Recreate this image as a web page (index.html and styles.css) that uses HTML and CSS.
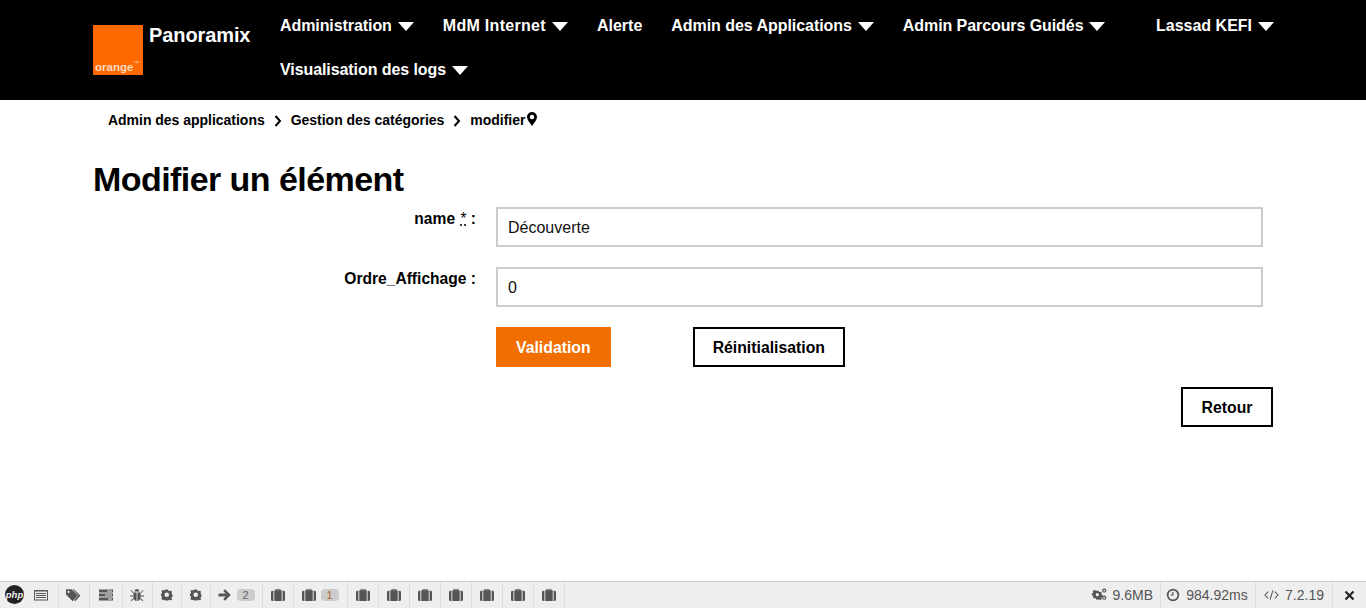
FILE: index.html
```html
<!DOCTYPE html>
<html lang="fr">
<head>
<meta charset="utf-8">
<title>Panoramix</title>
<link rel="stylesheet" href="styles.css">
</head>
<body>
<svg class="defs" width="0" height="0" aria-hidden="true">
  <symbol id="brief" viewBox="0 0 14 14"><path d="M4.500 2.200V1.200h5v1h1.200V13H3.300V2.200zM5.600 2.200h2.800V2.100H5.600zM0 4.200Q0 2.800 1.500 2.800H2.400V13H1.500Q0 13 0 11.500zM11.600 2.800h.9Q14 2.800 14 4.200v7.300Q14 13 12.500 13h-.9z"/></symbol>
  <symbol id="gear" viewBox="0 0 14 14"><path fill-rule="evenodd" d="M5.300 .5h3.400l.4 1.700 1.300.6 1.500-.9 1.700 1.700-.9 1.500.6 1.300 1.700.4v2.400l-1.700.4-.6 1.300.9 1.500-1.700 1.700-1.500-.9-1.300.6-.4 1.700H5.300l-.4-1.700-1.300-.6-1.500.9L.4 11.400l.9-1.500-.6-1.300L-.9 8.200V5.800l1.700-.4.6-1.300-.9-1.500 1.700-1.700 1.500.9 1.300-.6zM7 4.200a2.800 2.800 0 1 0 0 5.600 2.800 2.800 0 0 0 0-5.600z"/></symbol>
  <symbol id="caret" viewBox="0 0 16 9"><path d="M0 0h16L8 9z"/></symbol>
  <symbol id="chev" viewBox="0 0 8 12"><path d="M1.500 1L6 6l-4.500 5" fill="none" stroke="currentColor" stroke-width="2"/></symbol>
</svg>

<header class="topbar">
  <div class="container topbar-in">
    <a class="brand-logo" href="#"><span class="brand-word">orange</span><span class="brand-tm">™</span></a>
    <a class="brand-name" href="#">Panoramix</a>
    <nav class="menu">
      <a class="m-tight" href="#">Administration <svg class="caret"><use href="#caret"/></svg></a>
      <a class="m-wide" href="#">MdM Internet <svg class="caret"><use href="#caret"/></svg></a>
      <a href="#">Alerte</a>
      <a class="m-tight3" href="#">Admin des Applications <svg class="caret"><use href="#caret"/></svg></a>
      <a class="m-tight2" href="#">Admin Parcours Guidés <svg class="caret"><use href="#caret"/></svg></a>
      <a class="m-tight" href="#">Visualisation des logs <svg class="caret"><use href="#caret"/></svg></a>
    </nav>
    <a class="user" href="#">Lassad KEFI <svg class="caret"><use href="#caret"/></svg></a>
  </div>
</header>

<main class="container">
  <ol class="crumbs">
    <li>Admin des applications</li>
    <li class="sep"><svg class="chev"><use href="#chev"/></svg></li>
    <li>Gestion des catégories</li>
    <li class="sep"><svg class="chev"><use href="#chev"/></svg></li>
    <li class="last">modifier<svg class="pin" viewBox="0 0 10 14"><path fill-rule="evenodd" d="M5 0a5 5 0 0 1 5 5c0 3-3 6-5 9-2-3-5-6-5-9a5 5 0 0 1 5-5zM5 2.800a2.200 2.200 0 1 0 0 4.400 2.200 2.200 0 0 0 0-4.400z"/></svg></li>
  </ol>
  <h1 class="title">Modifier un élément</h1>
  <form class="form">
    <label class="lbl" for="f-name">name <abbr title="obligatoire">*</abbr> :</label>
    <input class="field" id="f-name" type="text" value="Découverte">
    <label class="lbl" for="f-ordre">Ordre_Affichage :</label>
    <input class="field" id="f-ordre" type="text" value="0">
    <div class="actions">
      <button class="btn btn-primary" type="button">Validation</button>
      <button class="btn btn-outline" type="button">Réinitialisation</button>
    </div>
  </form>
  <div class="back"><a class="btn btn-outline btn-back" href="#">Retour</a></div>
</main>

<footer class="debugbar">
  <div class="dbg-left">
    <span class="dbg-logo">php</span>
    <span class="dbg-i w-list"><svg class="ic" viewBox="0 0 14 14"><path fill-rule="evenodd" d="M0 2h14v10.500H0zM1 3.500v8h12v-8zM2 5h10v1H2zM2 7h10v1H2zM2 9h10v1H2z"/></svg></span>
    <span class="dbg-i w-tag"><svg class="ic ic-tag" viewBox="0 0 15 14"><path fill-rule="evenodd" d="M0 1h5.500l6 6-5 5.500L0 6zM2.500 2.500a1 1 0 1 0 0 2 1 1 0 0 0 0-2zM7.500 1l6.500 6-5 5.500-1-1L12 7 6.500 1z"/></svg></span>
    <span class="dbg-i w-bars"><svg class="ic" viewBox="0 0 14 14"><path fill-rule="evenodd" d="M0 1.500h14v3H0zM0 5.500h14v3H0zM0 9.500h14v3H0zM8 2.500v1h5v-1zM6 6.500v1h7v-1zM9 10.500v1h4v-1z"/></svg></span>
    <span class="dbg-i w-bug"><svg class="ic" viewBox="0 0 14 14"><path d="M4.500 3.500a2.500 2.500 0 0 1 5 0zM4 4.500h2.600V13C4.800 13 3.500 11.500 3.500 9.500V6zM7.400 4.500H10l.5 1.500v3.500c0 2-1.300 3.500-3.100 3.500zM1 2l3 3-.6.6-3-3zM13 2l-3 3 .6.6 3-3zM0 7.500h3.500v1H0zM10.500 7.500H14v1h-3.500zM3.400 10l.6.6-2.700 2.700-.6-.7zM10.600 10l-.6.6 2.700 2.700.6-.7z"/></svg></span>
    <span class="dbg-i w-gear"><svg class="ic ic-gear"><use href="#gear"/></svg></span>
    <span class="dbg-i w-gear2"><svg class="ic ic-gear"><use href="#gear"/></svg></span>
    <span class="dbg-i w-arrow"><svg class="ic" viewBox="0 0 14 14"><path d="M7 1.200L12.800 7 7 12.800 5.200 11l2.500-2.500H.5v-3h7.200L5.200 3z"/></svg><b class="badge">2</b></span>
    <span class="dbg-i w-b"><svg class="ic"><use href="#brief"/></svg></span>
    <span class="dbg-i w-b1"><svg class="ic"><use href="#brief"/></svg><b class="badge b-amber">1</b></span>
    <span class="dbg-i w-b"><svg class="ic"><use href="#brief"/></svg></span>
    <span class="dbg-i w-b"><svg class="ic"><use href="#brief"/></svg></span>
    <span class="dbg-i w-b"><svg class="ic"><use href="#brief"/></svg></span>
    <span class="dbg-i w-b"><svg class="ic"><use href="#brief"/></svg></span>
    <span class="dbg-i w-b"><svg class="ic"><use href="#brief"/></svg></span>
    <span class="dbg-i w-b"><svg class="ic"><use href="#brief"/></svg></span>
    <span class="dbg-i w-b"><svg class="ic"><use href="#brief"/></svg></span>
  </div>
  <div class="dbg-right">
    <span class="dbg-s w-mem"><svg class="ic" viewBox="0 0 16 14"><g fill-rule="evenodd"><path d="M4 4h3l.4 1.300 1.100.5 1.200-.6 1.500 1.500-.6 1.200.5 1.100 1.300.4v2.200l-1.300.4-.5 1.100.6 1.200-1.500 1.500-1.200-.6-1.100.5L7 15H4l-.4-1.300-1.100-.5-1.200.6L-.200 12.300l.6-1.200-.5-1.100L-1.400 9.600V7.400L-.100 7l.5-1.100-.6-1.200 1.500-1.500 1.200.6 1.100-.5zM5.500 7a2 2 0 1 0 0 4 2 2 0 0 0 0-4z" transform="translate(1 -1) scale(.85)"/><path d="M13 0a2.300 2.300 0 1 1 0 4.600A2.300 2.300 0 0 1 13 0zm0 1.300a1 1 0 1 0 0 2 1 1 0 0 0 0-2zM13 7.500a2.300 2.300 0 1 1 0 4.600 2.300 2.300 0 0 1 0-4.600zm0 1.300a1 1 0 1 0 0 2 1 1 0 0 0 0-2z"/></g></svg>9.6MB</span>
    <span class="dbg-s w-time"><svg class="ic" viewBox="0 0 14 14"><path fill-rule="evenodd" d="M7 .8a6.200 6.200 0 1 1 0 12.400A6.200 6.200 0 0 1 7 .8zM7 2.500a4.500 4.500 0 1 0 0 9 4.500 4.500 0 0 0 0-9zM6.300 3.800h1.200v3.700h-3V6.400h1.800z"/></svg>984.92ms</span>
    <span class="dbg-s w-php"><svg class="ic" viewBox="0 0 16 14"><path d="M4.500 3.500L1 7l3.500 3.500M11.500 3.500L15 7l-3.500 3.500M9.500 2L6.500 12" fill="none" stroke="currentColor" stroke-width="1.100"/></svg>7.2.19</span>
    <span class="dbg-close"><svg class="ic" viewBox="0 0 12 12"><path d="M2.500 .8L6 4.300 9.500 .8l1.700 1.700L7.700 6l3.500 3.500-1.700 1.700L6 7.700 2.500 11.200.8 9.500 4.300 6 .8 2.500z"/></svg></span>
  </div>
</footer>
</body>
</html>
```

FILE: styles.css
```css
* { box-sizing: border-box; }
html, body { margin: 0; height: 100%; }
body {
  display: flex;
  flex-direction: column;
  min-height: 608px;
  height: 608px;
  overflow: hidden;
  font-family: "Liberation Sans", Arial, sans-serif;
  color: #000;
  background: #fff;
}
a { color: inherit; text-decoration: none; }
.defs { position: absolute; }
.container { width: 1180px; margin: 0 auto; }

.topbar { background: #000; color: #fff; height: 100px; flex: none; }
.topbar-in { display: flex; align-items: flex-start; height: 100px; }
.brand-logo {
  width: 50px; height: 50px; margin-top: 25px; flex: none;
  background: #ff6900;
  display: flex; align-items: flex-end; padding: 0 0 2px 2px;
}
.brand-word { color: #ffd9bf; font-size: 11.500px; font-weight: 700; line-height: 12px; }
.brand-tm { color: #ffd9bf; font-size: 6px; line-height: 15px; margin-bottom: 2px; }
.brand-name { font-size: 20px; font-weight: 700; line-height: 24px; margin: 23px 0 0 6px; width: 131px; flex: none; letter-spacing: -.1px; }
.menu { display: flex; flex-wrap: wrap; gap: 0 29px; width: 860px; flex: none; padding-top: 4px; }
.menu a, .user { font-size: 16px; font-weight: 700; line-height: 44px; white-space: nowrap; display: flex; align-items: center; gap: 6px; }
.menu .m-tight { letter-spacing: -.08px; }
.menu .m-tight2 { letter-spacing: -.08px; }
.menu .m-tight3 { letter-spacing: -.05px; }
.menu .m-wide { letter-spacing: .3px; }
.user { margin: 4px 0 0 16px; }
.caret { width: 16px; height: 9px; fill: #fff; }

.crumbs {
  list-style: none; margin: 0; padding: 12px 0 0 15px;
  display: flex; align-items: center;
  font-size: 14px; font-weight: 700; line-height: 17px; letter-spacing: -.02px;
}
.sep { width: 26px; display: flex; justify-content: center; }
.chev { width: 8px; height: 12px; color: #000; }
.last { display: flex; align-items: center; gap: 2px; }
.pin { width: 10px; height: 14px; margin-top: -3px; }
.title { margin: 0; padding-top: 31px; font-size: 34px; font-weight: 700; line-height: 38px; letter-spacing: -.56px; }

.form {
  display: grid;
  grid-template-columns: 383px 767px;
  column-gap: 20px;
  row-gap: 20px;
  margin-top: 9px;
}
.lbl { text-align: right; font-size: 15.600px; font-weight: 700; line-height: 18px; padding-top: 3px; }
.lbl abbr { font-weight: 400; text-decoration: underline dotted; margin-left: 1px; }
.field {
  height: 40px; width: 100%;
  border: 2px solid #ccc; outline: 0; padding: 2px 10px 0;
  font: 400 16px "Liberation Sans", Arial, sans-serif; color: #111; background: #fff;
}
.actions { grid-column: 2; display: flex; gap: 82px; }
.btn {
  display: inline-flex; align-items: center; justify-content: center;
  height: 40px; padding: 1px 18px 0;
  border: 2px solid #000;
  font: 700 15.800px "Liberation Sans", Arial, sans-serif;
  background: #fff; color: #000;
}
.btn-primary { background: #f16e00; border-color: #f16e00; color: #fff; }
.btn-back { padding: 1px 18.500px 0; }
.back { display: flex; justify-content: flex-end; margin-top: 20px; }

.debugbar {
  margin-top: auto;
  height: 27px; flex: none;
  display: flex; justify-content: space-between;
  background: #eee;
  border-top: 1px solid #ccc;
  color: #555;
  font-size: 14px;
}
.dbg-left, .dbg-right { display: flex; height: 100%; }
.dbg-logo {
  width: 19px; height: 19px; margin: 3px 0 0 5px; border-radius: 50%;
  background: #222; color: #eee; font: italic 700 9.500px/19px "Liberation Sans", sans-serif; text-align: center;
}
.dbg-i, .dbg-s { display: flex; align-items: center; justify-content: center; border-right: 1px solid #ddd; flex: none; }
.ic { width: 14px; height: 14px; fill: currentColor; overflow: visible; flex: none; }
.ic-gear { width: 11.500px; height: 11.500px; }
.ic-tag { width: 15.500px; height: 15px; }
.w-list { width: 35px; }
.w-tag { width: 31px; }
.w-bars { width: 32.500px; }
.w-bug { width: 30px; }
.w-gear { width: 29.500px; }
.w-gear2 { width: 28.500px; }
.w-arrow { width: 52px; gap: 5px; }
.w-b { width: 31px; }
.w-b1 { width: 54px; gap: 5px; }
.badge {
  width: 18px; height: 12px; border-radius: 4px; background: #ccc;
  font-size: 11px; font-weight: 400; line-height: 12px; text-align: center; color: #666;
}
.b-amber { color: #a8642a; }
.dbg-s { gap: 6px; }
.w-mem { padding-right: 7px; }
.w-mem .ic { width: 15px; }
.w-time { width: 95px; padding-right: 2px; }
.w-php { width: 77px; }
.w-php .ic { width: 15px; }
.dbg-close { width: 33px; display: flex; align-items: center; justify-content: center; color: #222; }
.dbg-close .ic { width: 11px; height: 11px; }
```
